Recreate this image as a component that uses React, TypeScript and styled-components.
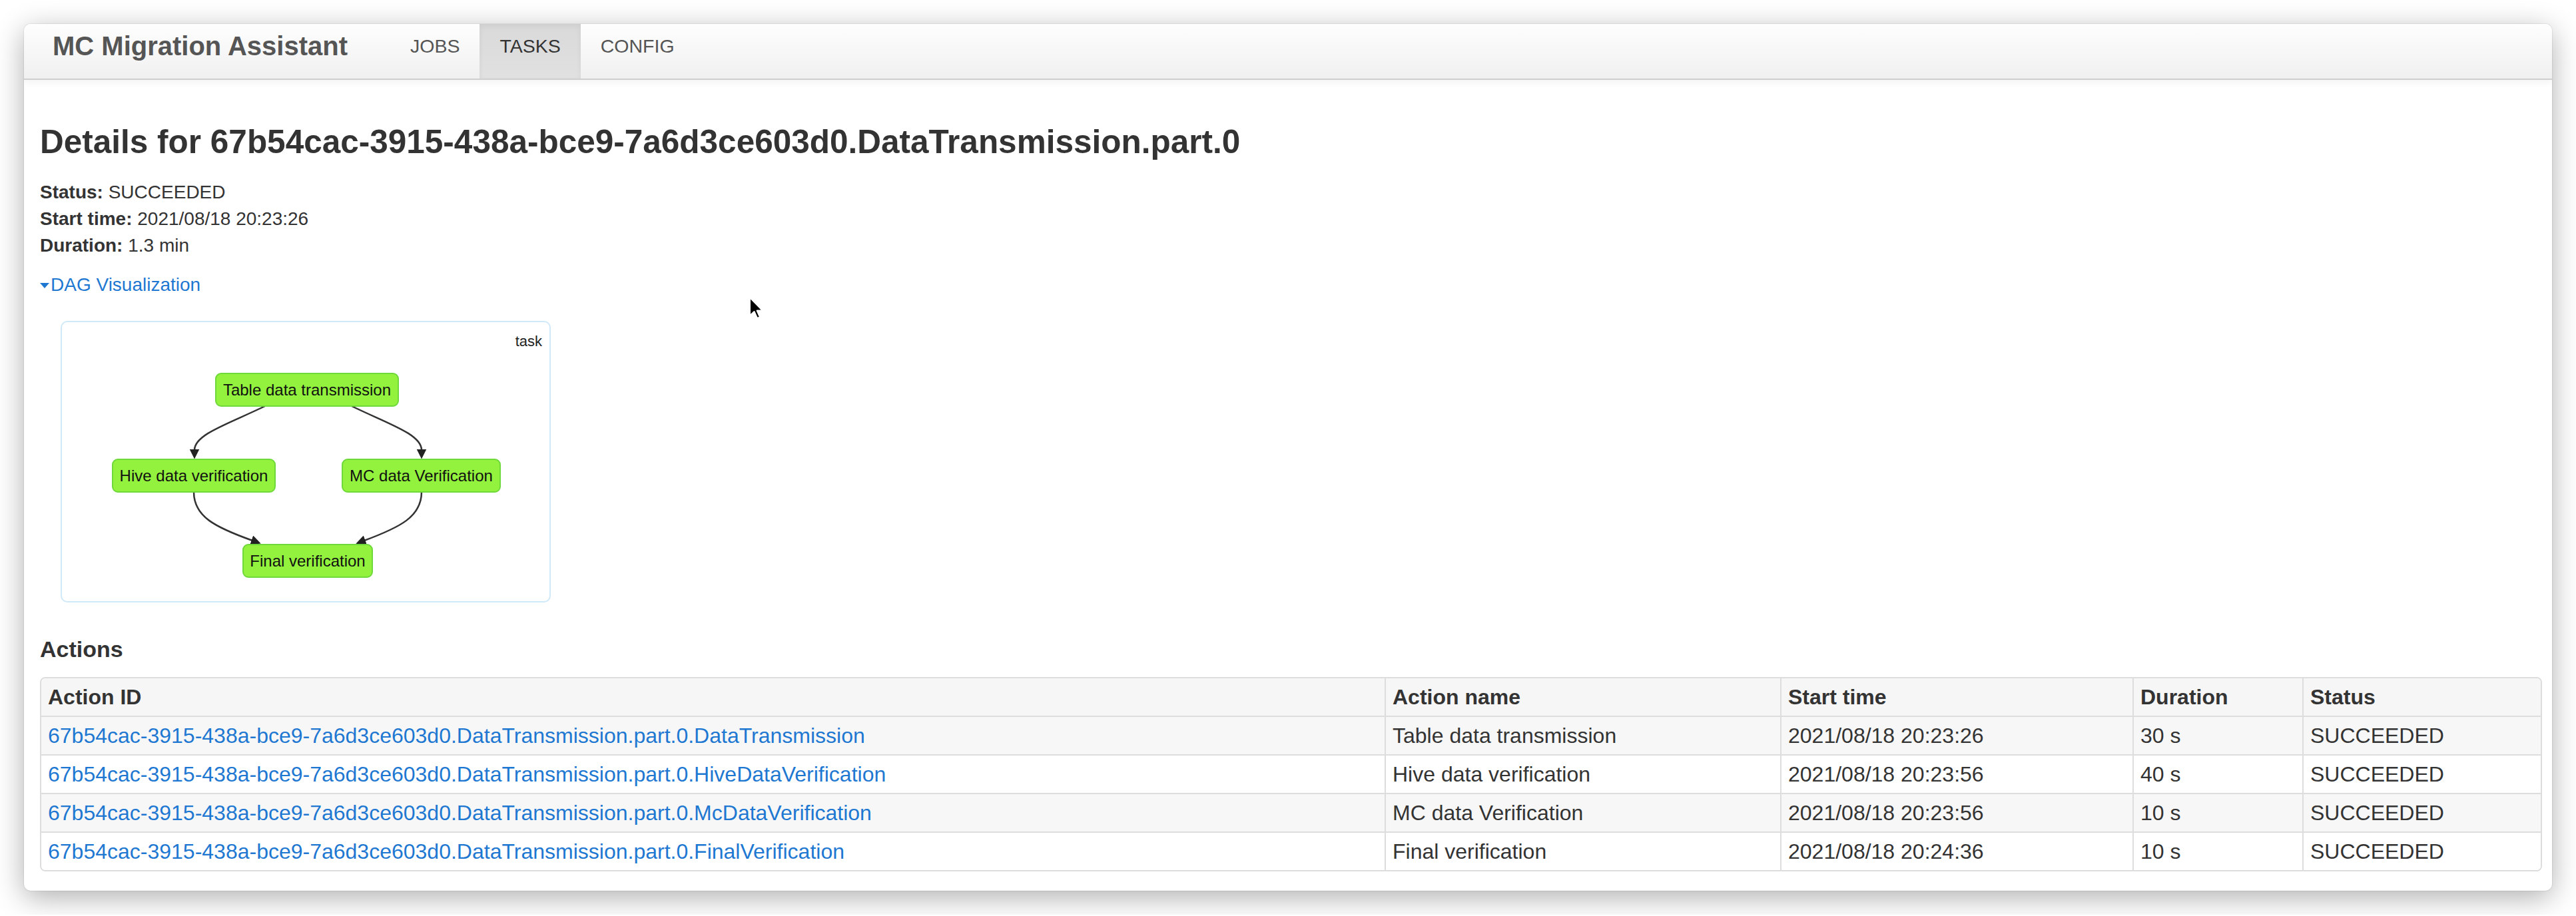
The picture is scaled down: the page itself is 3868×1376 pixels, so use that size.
import styled, { createGlobalStyle } from "styled-components";

const GlobalStyle = createGlobalStyle`
  html, body {
    margin: 0;
    padding: 0;
    background: #ffffff;
  }
  body {
    font-family: "Liberation Sans", Arial, Helvetica, sans-serif;
    color: #333333;
    font-size: 28px;
    line-height: 40px;
  }
  * {
    box-sizing: border-box;
  }
`;

const Window = styled.div`
  margin: 36px;
  width: 3796px;
  background: #ffffff;
  border-radius: 10px;
  box-shadow: 0 0 0 1px rgba(0, 0, 0, 0.06), 0 10px 44px rgba(0, 0, 0, 0.32);
  overflow: hidden;
`;

const NavBar = styled.nav`
  display: flex;
  align-items: flex-start;
  height: 84px;
  padding: 0 0 0 43px;
  background: linear-gradient(#fefefe, #f0f0f0);
  border-bottom: 2px solid #cfcfcf;
  box-shadow: 0 4px 10px rgba(0, 0, 0, 0.05);
  position: relative;
`;

const Brand = styled.div`
  padding-top: 13px;
  font-size: 40px;
  line-height: 40px;
  font-weight: bold;
  color: #555555;
  margin-right: 64px;
`;

const NavList = styled.ul`
  display: flex;
  margin: 0;
  padding: 0;
  list-style: none;
`;

const NavItem = styled.li<{ $active?: boolean }>`
  height: 82px;
  padding: 13px 30px 0;
  font-size: 28.5px;
  line-height: 40px;
  color: ${(p) => (p.$active ? "#333333" : "#555555")};
  background: ${(p) => (p.$active ? "linear-gradient(#d9d9d9, #e1e1e1)" : "transparent")};
  box-shadow: ${(p) => (p.$active ? "inset 0 3px 9px rgba(0, 0, 0, 0.06)" : "none")};
`;

const Content = styled.main`
  padding: 0 15px 29px 24px;
`;

const Title = styled.h3`
  margin: 66px 0 30px;
  font-size: 49.5px;
  line-height: 53px;
  font-weight: bold;
  color: #333333;
`;

const InfoLine = styled.div`
  line-height: 40px;

  b {
    font-weight: bold;
  }
`;

const Toggle = styled.a`
  display: inline-block;
  margin-top: 19px;
  color: #1e78d2;
  text-decoration: none;
  line-height: 40px;
  cursor: pointer;
`;

const Caret = styled.span`
  display: inline-block;
  width: 0;
  height: 0;
  margin-right: 2px;
  vertical-align: 4px;
  border-left: 7px solid transparent;
  border-right: 7px solid transparent;
  border-top: 8px solid #1e78d2;
`;

const DagBox = styled.div`
  width: 736px;
  height: 423px;
  margin: 34px 0 0 31px;
  border: 2px solid #cfe9f9;
  border-radius: 10px;
  background: #ffffff;
`;

const SectionTitle = styled.h4`
  margin: 50px 0 22px;
  font-size: 34px;
  line-height: 40px;
  font-weight: bold;
  color: #333333;
`;

const Table = styled.table`
  width: 100%;
  table-layout: fixed;
  border-collapse: separate;
  border-spacing: 0;
  border: 2px solid #dddddd;
  border-radius: 8px;
  overflow: hidden;
  font-size: 32px;
`;

const Th = styled.th`
  padding: 8px 10px;
  text-align: left;
  font-weight: bold;
  line-height: 40px;
  background: #f6f6f6;
  border-left: 2px solid #dddddd;
  white-space: nowrap;

  &:first-child {
    border-left: none;
  }
`;

const Tr = styled.tr<{ $striped?: boolean }>`
  background: ${(p) => (p.$striped ? "#f7f7f7" : "#ffffff")};
`;

const Td = styled.td`
  padding: 8px 10px;
  line-height: 40px;
  border-top: 2px solid #dddddd;
  border-left: 2px solid #dddddd;
  white-space: nowrap;
  overflow: hidden;

  &:first-child {
    border-left: none;
  }
`;

const IdLink = styled.a`
  color: #1e78d2;
  text-decoration: none;
`;

const Cursor = styled.svg`
  position: absolute;
  left: 1124px;
  top: 445px;
`;

const taskId = "67b54cac-3915-438a-bce9-7a6d3ce603d0.DataTransmission.part.0";

const actions = [
  { id: "DataTransmission", name: "Table data transmission", start: "2021/08/18 20:23:26", duration: "30 s" },
  { id: "HiveDataVerification", name: "Hive data verification", start: "2021/08/18 20:23:56", duration: "40 s" },
  { id: "McDataVerification", name: "MC data Verification", start: "2021/08/18 20:23:56", duration: "10 s" },
  { id: "FinalVerification", name: "Final verification", start: "2021/08/18 20:24:36", duration: "10 s" },
];

const nodes = [
  { label: "Table data transmission", x: 231, y: 77, w: 274 },
  { label: "Hive data verification", x: 76, y: 206, w: 244 },
  { label: "MC data Verification", x: 421, y: 206, w: 237 },
  { label: "Final verification", x: 272, y: 334, w: 194 },
];

const edges = [
  "M305,126 C252,152 199,168 199,192",
  "M435,126 C488,152 540,168 540,192",
  "M198,255 C198,292 230,308 286,328",
  "M540,255 C540,292 508,308 454,328",
];

function Dag() {
  return (
    <svg width="732" height="419" viewBox="0 0 732 419">
      <defs>
        <marker id="arrow" viewBox="0 0 10 10" refX="1" refY="5" markerWidth="6" markerHeight="6" orient="auto">
          <path d="M0,0 L10,5 L0,10 z" fill="#222" />
        </marker>
      </defs>
      <text x="721" y="36" textAnchor="end" fontSize="22" fontFamily="Liberation Sans, Arial, sans-serif" fill="#222">
        task
      </text>
      {edges.map((d) => (
        <path key={d} d={d} fill="none" stroke="#333" strokeWidth="2.5" markerEnd="url(#arrow)" />
      ))}
      {nodes.map((n) => (
        <g key={n.label}>
          <rect x={n.x} y={n.y} width={n.w} height={49} rx={8} fill="#93f23d" stroke="#6fd83a" strokeWidth="2" />
          <text
            x={n.x + n.w / 2}
            y={n.y + 33}
            textAnchor="middle"
            fontSize="24"
            fontFamily="Liberation Sans, Arial, sans-serif"
            fill="#111"
          >
            {n.label}
          </text>
        </g>
      ))}
    </svg>
  );
}

export default function App() {
  return (
    <>
      <GlobalStyle />
      <Window>
        <NavBar>
          <Brand>MC Migration Assistant</Brand>
          <NavList>
            <NavItem>JOBS</NavItem>
            <NavItem $active>TASKS</NavItem>
            <NavItem>CONFIG</NavItem>
          </NavList>
        </NavBar>
        <Content>
          <Title>Details for {taskId}</Title>
          <InfoLine>
            <b>Status:</b> SUCCEEDED
          </InfoLine>
          <InfoLine>
            <b>Start time:</b> 2021/08/18 20:23:26
          </InfoLine>
          <InfoLine>
            <b>Duration:</b> 1.3 min
          </InfoLine>
          <Toggle>
            <Caret />
            DAG Visualization
          </Toggle>
          <DagBox>
            <Dag />
          </DagBox>
          <SectionTitle>Actions</SectionTitle>
          <Table>
            <colgroup>
              <col style={{ width: 2017 }} />
              <col style={{ width: 594 }} />
              <col style={{ width: 529 }} />
              <col style={{ width: 255 }} />
              <col />
            </colgroup>
            <thead>
              <tr>
                <Th>Action ID</Th>
                <Th>Action name</Th>
                <Th>Start time</Th>
                <Th>Duration</Th>
                <Th>Status</Th>
              </tr>
            </thead>
            <tbody>
              {actions.map((a, i) => (
                <Tr key={a.id} $striped={i % 2 === 0}>
                  <Td>
                    <IdLink>
                      {taskId}.{a.id}
                    </IdLink>
                  </Td>
                  <Td>{a.name}</Td>
                  <Td>{a.start}</Td>
                  <Td>{a.duration}</Td>
                  <Td>SUCCEEDED</Td>
                </Tr>
              ))}
            </tbody>
          </Table>
        </Content>
      </Window>
      <Cursor width="24" height="36" viewBox="0 0 24 36">
        <path d="M2,2 L2,29 L8.5,23 L13,33 L17,31.3 L12.6,21.6 L21,21.6 Z" fill="#000" stroke="#fff" strokeWidth="2" strokeLinejoin="round" />
      </Cursor>
    </>
  );
}
